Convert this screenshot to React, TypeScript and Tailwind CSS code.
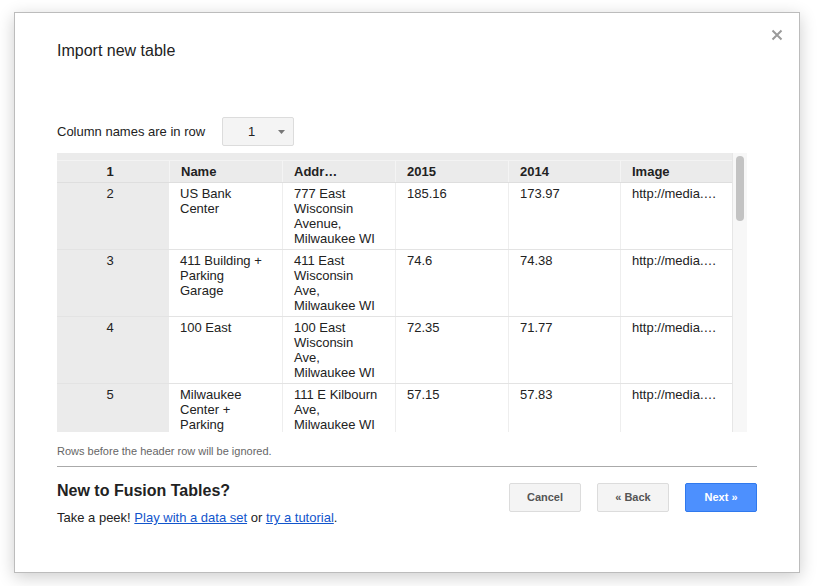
import React from 'react';

interface Row {
  num: string;
  name: string[];
  addr: string[];
  y2015: string;
  y2014: string;
  image: string;
}

const rows: Row[] = [
  { num: '2', name: ['US Bank', 'Center'], addr: ['777 East', 'Wisconsin', 'Avenue,', 'Milwaukee WI'], y2015: '185.16', y2014: '173.97', image: 'http://media.…' },
  { num: '3', name: ['411 Building +', 'Parking', 'Garage'], addr: ['411 East', 'Wisconsin', 'Ave,', 'Milwaukee WI'], y2015: '74.6', y2014: '74.38', image: 'http://media.…' },
  { num: '4', name: ['100 East'], addr: ['100 East', 'Wisconsin', 'Ave,', 'Milwaukee WI'], y2015: '72.35', y2014: '71.77', image: 'http://media.…' },
  { num: '5', name: ['Milwaukee', 'Center +', 'Parking'], addr: ['111 E Kilbourn', 'Ave,', 'Milwaukee WI'], y2015: '57.15', y2014: '57.83', image: 'http://media.…' },
];

const cols = 'grid grid-cols-[112px_113px_113px_113px_112px_112px]';

const Lines: React.FC<{ lines: string[] }> = ({ lines }) => (
  <>
    {lines.map((l, i) => (
      <div key={i} className="whitespace-nowrap">{l}</div>
    ))}
  </>
);

export default function App() {
  return (
    <div
      className="w-[821px] h-[586px] bg-white pt-[12px] pl-[14px] text-[#222]"
      style={{ fontFamily: '"Liberation Sans", Arial, sans-serif' }}
    >
      <div className="relative w-[786px] h-[561px] border border-[#bcbcbc] bg-white shadow-[0_4px_16px_rgba(0,0,0,0.2)] px-[42px] pt-[28px]">
        {/* close */}
        <button className="absolute top-[16px] right-[16px] w-[12px] h-[12px]">
          <svg width="12" height="12" viewBox="0 0 12 12">
            <path d="M1.5 1.5 L10.5 10.5 M10.5 1.5 L1.5 10.5" stroke="#9a9a9a" strokeWidth="2" />
          </svg>
        </button>

        <h1 className="text-[16px] leading-[20px]">Import new table</h1>

        <div className="flex items-center mt-[56px] h-[29px]">
          <span className="w-[165px] text-[13px]">Column names are in row</span>
          <div className="flex items-center w-[72px] h-[29px] bg-[#f4f4f4] border border-[#dcdcdc] rounded-[2px] pl-[25px] pr-[8px] text-[13px]">
            <span>1</span>
            <svg className="ml-auto" width="7" height="4" viewBox="0 0 7 4">
              <path d="M0 0 L7 0 L3.5 4 Z" fill="#777" />
            </svg>
          </div>
        </div>

        {/* data preview */}
        <div className="flex mt-[7px] w-[690px] h-[279px] overflow-hidden">
          <div className="w-[675px] text-[13px] leading-[15px]">
            <div className="h-[7px] bg-[#ebebeb]" />
            <div className={`${cols} h-[23px] bg-[#ebebeb] border-t border-b border-t-[#f3f3f3] border-b-[#dedede] font-bold`}>
              <div className="text-center pr-[6px] pt-[3px]">1</div>
              <div className="pl-[11px] pt-[3px] border-l border-[#f4f4f4]">Name</div>
              <div className="pl-[11px] pt-[3px] border-l border-[#f4f4f4]">Addr…</div>
              <div className="pl-[11px] pt-[3px] border-l border-[#f4f4f4]">2015</div>
              <div className="pl-[11px] pt-[3px] border-l border-[#f4f4f4]">2014</div>
              <div className="pl-[11px] pt-[3px] border-l border-[#f4f4f4]">Image</div>
            </div>
            {rows.map((r) => (
              <div key={r.num} className={`${cols} h-[67px] border-b border-[#e3e3e3]`}>
                <div className="bg-[#ebebeb] text-center pr-[6px] pt-[3px]">{r.num}</div>
                <div className="pl-[11px] pt-[3px]"><Lines lines={r.name} /></div>
                <div className="pl-[11px] pt-[3px] border-l border-[#eeeeee]"><Lines lines={r.addr} /></div>
                <div className="pl-[11px] pt-[3px] border-l border-[#eeeeee]">{r.y2015}</div>
                <div className="pl-[11px] pt-[3px] border-l border-[#eeeeee]">{r.y2014}</div>
                <div className="pl-[11px] pt-[3px] border-l border-[#eeeeee] whitespace-nowrap overflow-hidden">{r.image}</div>
              </div>
            ))}
          </div>
          <div className="w-[15px] h-full bg-[#f7f7f7] border-l border-[#e6e6e6] pt-[3px] pl-[3px]">
            <div className="w-[8px] h-[65px] rounded-full bg-[#c3c3c3]" />
          </div>
        </div>

        <p className="mt-[13px] text-[11px] leading-[13px] text-[#666]">Rows before the header row will be ignored.</p>
        <div className="mt-[8px] h-px bg-[#aaa]" />

        <div className="flex justify-between items-start">
          <div className="mt-[14px]">
            <h2 className="text-[16px] leading-[20px] font-bold">New to Fusion Tables?</h2>
            <p className="mt-[9px] text-[13px] leading-[16px]">
              Take a peek!{' '}
              <a href="#" className="text-[#1155cc] underline">Play with a data set</a> or{' '}
              <a href="#" className="text-[#1155cc] underline">try a tutorial</a>.
            </p>
          </div>
          <div className="flex gap-[16px] mt-[16px]">
            <button className="w-[72px] h-[29px] bg-[#f4f4f4] border border-[#dcdcdc] rounded-[2px] text-[11px] font-bold text-[#555]">Cancel</button>
            <button className="w-[72px] h-[29px] bg-[#f4f4f4] border border-[#dcdcdc] rounded-[2px] text-[11px] font-bold text-[#555]">« Back</button>
            <button className="w-[72px] h-[29px] bg-[#4d90fe] border border-[#3079ed] rounded-[2px] text-[11px] font-bold text-white">Next »</button>
          </div>
        </div>
      </div>
    </div>
  );
}
